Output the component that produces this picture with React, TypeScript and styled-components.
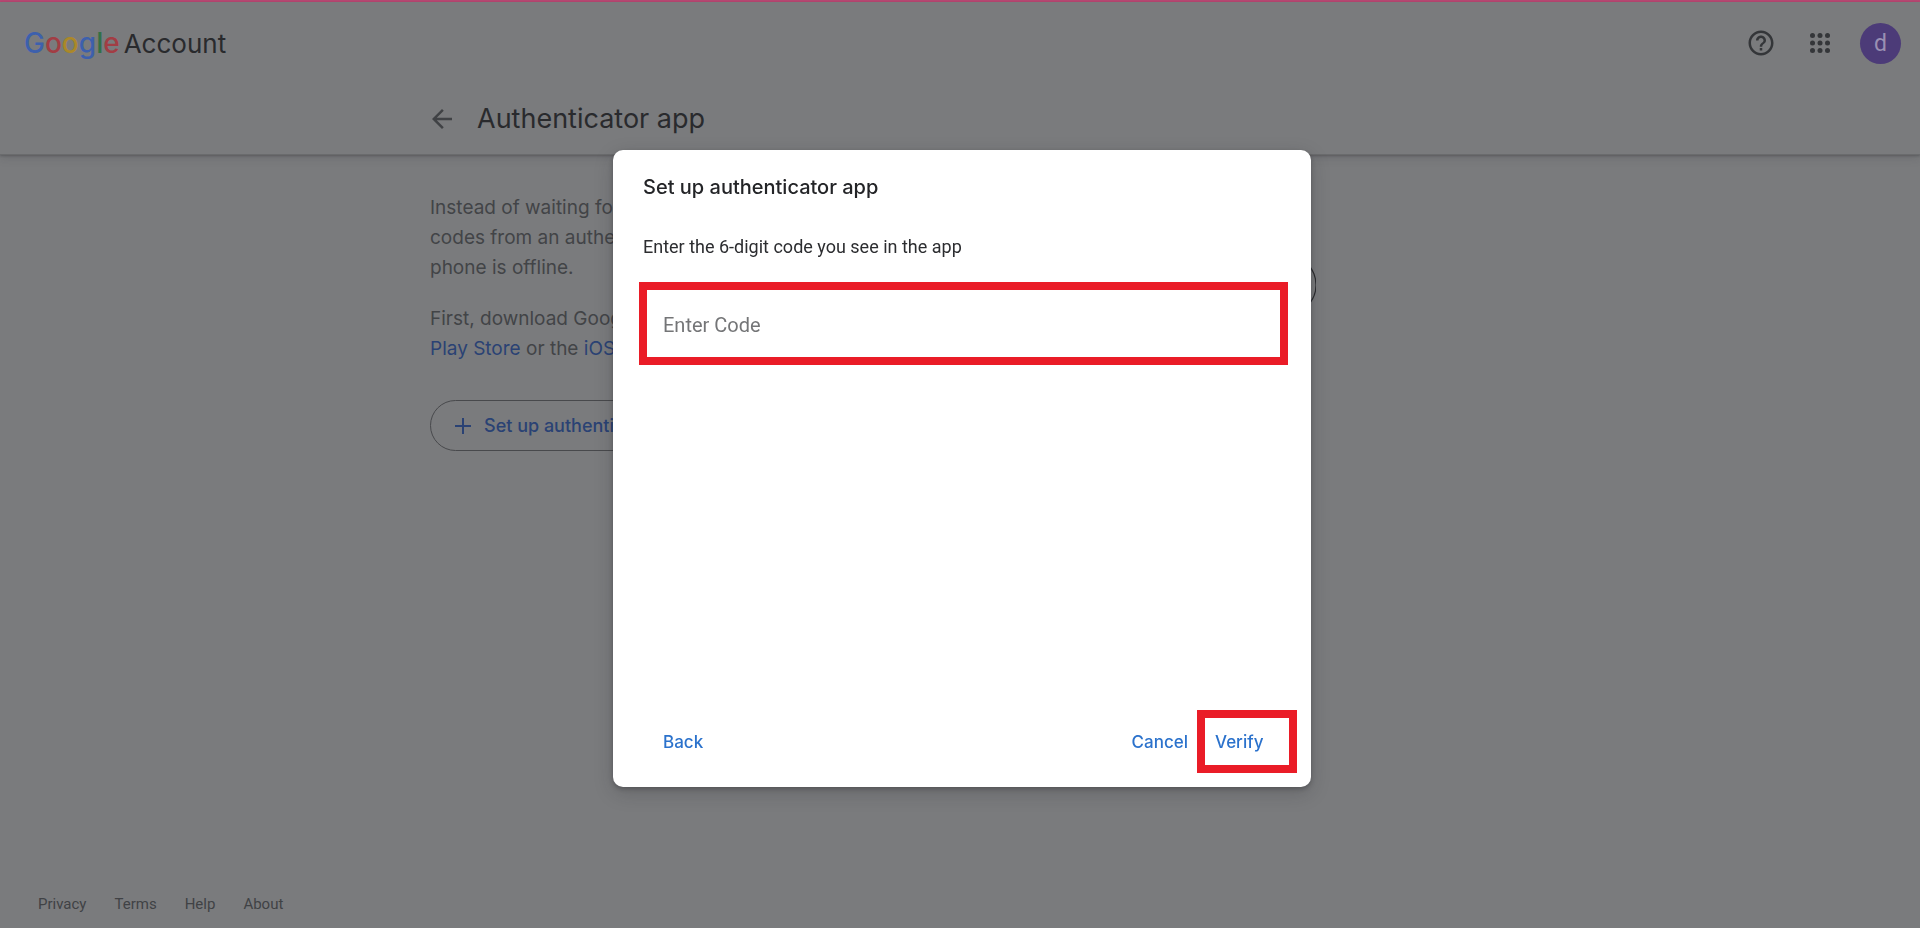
import React from 'react';
import styled, { createGlobalStyle } from 'styled-components';

const sans = `Inter, "Liberation Sans", sans-serif`;
const roboto = `Roboto, "Liberation Sans", sans-serif`;

const GlobalStyle = createGlobalStyle`
  *, *::before, *::after { box-sizing: border-box; }
  body { margin: 0; background: #7a7b7d; font-family: ${sans}; }
  h1, h2, p { margin: 0; font-weight: 400; }
  button { border: 0; background: none; padding: 0; color: inherit; font: inherit; cursor: pointer; }
  a { color: inherit; text-decoration: none; }
  svg { display: block; }
`;

const Page = styled.div`
  display: flex;
  flex-direction: column;
  min-height: 100vh;
  border-top: 2px solid #b94873;
`;

const Header = styled.header`
  background: #7a7b7d;
  border-bottom: 1px solid #6a6b6d;
  box-shadow: 0 1px 2px rgba(40, 41, 44, 0.3), 0 3px 9px rgba(40, 41, 44, 0.15);
`;

const TopBar = styled.div`
  display: flex;
  align-items: center;
  justify-content: space-between;
  height: 82px;
  padding: 0 19px 0 24px;
`;

const Brand = styled.a`
  display: flex;
  align-items: baseline;
  gap: 4px;
  line-height: 40px;
`;

const Logo = styled.span`
  font-size: 28px;
  font-weight: 500;
`;

const Letter = styled.span<{ $color: string }>`
  color: ${({ $color }) => $color};
`;

const Product = styled.span`
  font-size: 26px;
  color: #292a2d;
`;

const Tools = styled.div`
  display: flex;
  align-items: center;
  gap: 29px;
  color: #343639;
`;

const Avatar = styled.button`
  width: 41px;
  height: 41px;
  margin-left: -4px;
  border-radius: 50%;
  background: #4c3b78;
  color: #9a90b3;
  font: 400 23px/41px ${roboto};
`;

const Column = styled.div`
  width: 100%;
  max-width: 1060px;
  margin: 0 auto;
`;

const TitleRow = styled(Column)`
  display: flex;
  align-items: center;
  gap: 25px;
  height: 70px;
  padding-left: 2px;
  color: #404245;
`;

const PageTitle = styled.h1`
  font-size: 27px;
  line-height: 36px;
  color: #292a2d;
`;

const Main = styled.main`
  flex: 1;
`;

const Content = styled(Column)`
  display: flex;
  justify-content: space-between;
  padding: 38px 174px 40px 0;
`;

const Intro = styled.div`
  width: 510px;
  color: #424447;
`;

const Paragraph = styled.p`
  margin-bottom: 21px;
  font-size: 19px;
  line-height: 30px;
`;

const InlineLink = styled.a`
  color: #2a4274;
`;

const SetupButton = styled.button`
  display: flex;
  align-items: center;
  gap: 13px;
  height: 51px;
  margin-top: 36px;
  padding: 0 30px 0 24px;
  border: 1px solid #48494c;
  border-radius: 26px;
  color: #2a4274;
  font-size: 18px;
  font-weight: 500;
`;

const Footer = styled.footer`
  display: flex;
  gap: 28px;
  padding: 0 38px 14px;
  color: #404245;
  font: 400 15px/20px ${roboto};
`;

const Scrim = styled.div`
  position: fixed;
  inset: 0;
  display: grid;
  place-items: center;
  padding: 9px 0 0 4px;
`;

const Dialog = styled.section`
  display: flex;
  flex-direction: column;
  width: 698px;
  max-width: 100%;
  min-height: 637px;
  padding: 22px 14px 14px 26px;
  border-radius: 10px;
  background: #fff;
  box-shadow: 0 2px 4px rgba(30, 31, 34, 0.3), 0 6px 20px rgba(30, 31, 34, 0.2);
`;

const DialogTitle = styled.h2`
  padding-left: 4px;
  font-size: 20px;
  font-weight: 500;
  line-height: 30px;
  color: #232427;
`;

const CodeLabel = styled.label`
  margin-top: 33px;
  padding-left: 4px;
  font: 400 18px/24px ${roboto};
  color: #2c2d30;
`;

const CodeInput = styled.input`
  height: 83px;
  margin: 23px 9px 0 0;
  padding: 2px 16px 0;
  border: 8px solid #ea1c27;
  border-radius: 0;
  outline: 0;
  background: #fff;
  font: 400 20px/28px ${roboto};
  color: #2c2d30;

  &::placeholder { color: #747577; opacity: 1; }
`;

const Actions = styled.div`
  display: flex;
  align-items: center;
  gap: 9px;
  margin-top: auto;
  padding-left: 24px;
  color: #2b72cc;
  font-size: 17px;
  font-weight: 500;
  line-height: 24px;
`;

const BackButton = styled.button`
  margin-right: auto;
`;

const VerifyButton = styled.button`
  width: 100px;
  height: 63px;
  padding-left: 10px;
  border: 8px solid #ea1c27;
  text-align: left;
`;

const logoLetters: [string, string][] = [
  ['G', '#3d60ad'],
  ['o', '#a23d44'],
  ['o', '#ab8828'],
  ['g', '#3d60ad'],
  ['l', '#317147'],
  ['e', '#a23d44'],
];

const HelpIcon = () => (
  <svg width="30" height="30" viewBox="0 0 24 24" fill="currentColor" aria-hidden="true">
    <path d="M11 18h2v-2h-2v2zm1-16C6.480 2 2 6.480 2 12s4.480 10 10 10 10-4.480 10-10S17.520 2 12 2zm0 18c-4.410 0-8-3.590-8-8s3.590-8 8-8 8 3.590 8 8-3.590 8-8 8zm0-14c-2.210 0-4 1.790-4 4h2c0-1.100.9-2 2-2s2 .9 2 2c0 2-3 1.750-3 5h2c0-2.250 3-2.500 3-5 0-2.210-1.790-4-4-4z" />
  </svg>
);

const AppsIcon = () => (
  <svg width="30" height="30" viewBox="0 0 24 24" fill="currentColor" aria-hidden="true">
    {[6, 12, 18].map((y) => [6, 12, 18].map((x) => <circle key={`${x}-${y}`} cx={x} cy={y} r="2" />))}
  </svg>
);

const ArrowIcon = () => (
  <svg width="20" height="20" viewBox="4 4 16 16" fill="currentColor" aria-hidden="true">
    <path d="M20 11H7.830l5.590-5.590L12 4l-8 8 8 8 1.410-1.410L7.830 13H20v-2z" />
  </svg>
);

const PlusIcon = () => (
  <svg width="16" height="16" viewBox="0 0 16 16" stroke="currentColor" strokeWidth="2" aria-hidden="true">
    <path d="M8 0v16M0 8h16" />
  </svg>
);

const PhoneArt = () => (
  <svg width="200" height="170" viewBox="0 0 200 170" fill="none" stroke="#2b2c2f" strokeWidth="1.200" aria-hidden="true">
    <rect x="60" y="10" width="80" height="150" rx="10" />
    <circle cx="170" cy="92" r="30" />
  </svg>
);

export default function App() {
  return (
    <>
      <GlobalStyle />
      <Page>
        <Header>
          <TopBar>
            <Brand href="#">
              <Logo>
                {logoLetters.map(([char, color], i) => (
                  <Letter key={i} $color={color}>{char}</Letter>
                ))}
              </Logo>
              <Product>Account</Product>
            </Brand>
            <Tools>
              <button aria-label="Help"><HelpIcon /></button>
              <button aria-label="Google apps"><AppsIcon /></button>
              <Avatar aria-label="Account menu">d</Avatar>
            </Tools>
          </TopBar>
          <TitleRow>
            <button aria-label="Go back"><ArrowIcon /></button>
            <PageTitle>Authenticator app</PageTitle>
          </TitleRow>
        </Header>
        <Main>
          <Content>
            <Intro>
              <Paragraph>
                Instead of waiting for text messages, get verification codes from an authenticator app. It works even
                if your phone is offline.
              </Paragraph>
              <Paragraph>
                First, download Google Authenticator from the Google{' '}
                <InlineLink href="#">Play Store</InlineLink> or the <InlineLink href="#">iOS App Store</InlineLink>.
              </Paragraph>
              <SetupButton>
                <PlusIcon />
                Set up authenticator
              </SetupButton>
            </Intro>
            <PhoneArt />
          </Content>
        </Main>
        <Footer>
          <a href="#">Privacy</a>
          <a href="#">Terms</a>
          <a href="#">Help</a>
          <a href="#">About</a>
        </Footer>
      </Page>
      <Scrim>
        <Dialog role="dialog" aria-modal="true" aria-labelledby="dialog-title">
          <DialogTitle id="dialog-title">Set up authenticator app</DialogTitle>
          <CodeLabel htmlFor="code">Enter the 6-digit code you see in the app</CodeLabel>
          <CodeInput id="code" type="text" inputMode="numeric" placeholder="Enter Code" />
          <Actions>
            <BackButton>Back</BackButton>
            <button>Cancel</button>
            <VerifyButton>Verify</VerifyButton>
          </Actions>
        </Dialog>
      </Scrim>
    </>
  );
}
